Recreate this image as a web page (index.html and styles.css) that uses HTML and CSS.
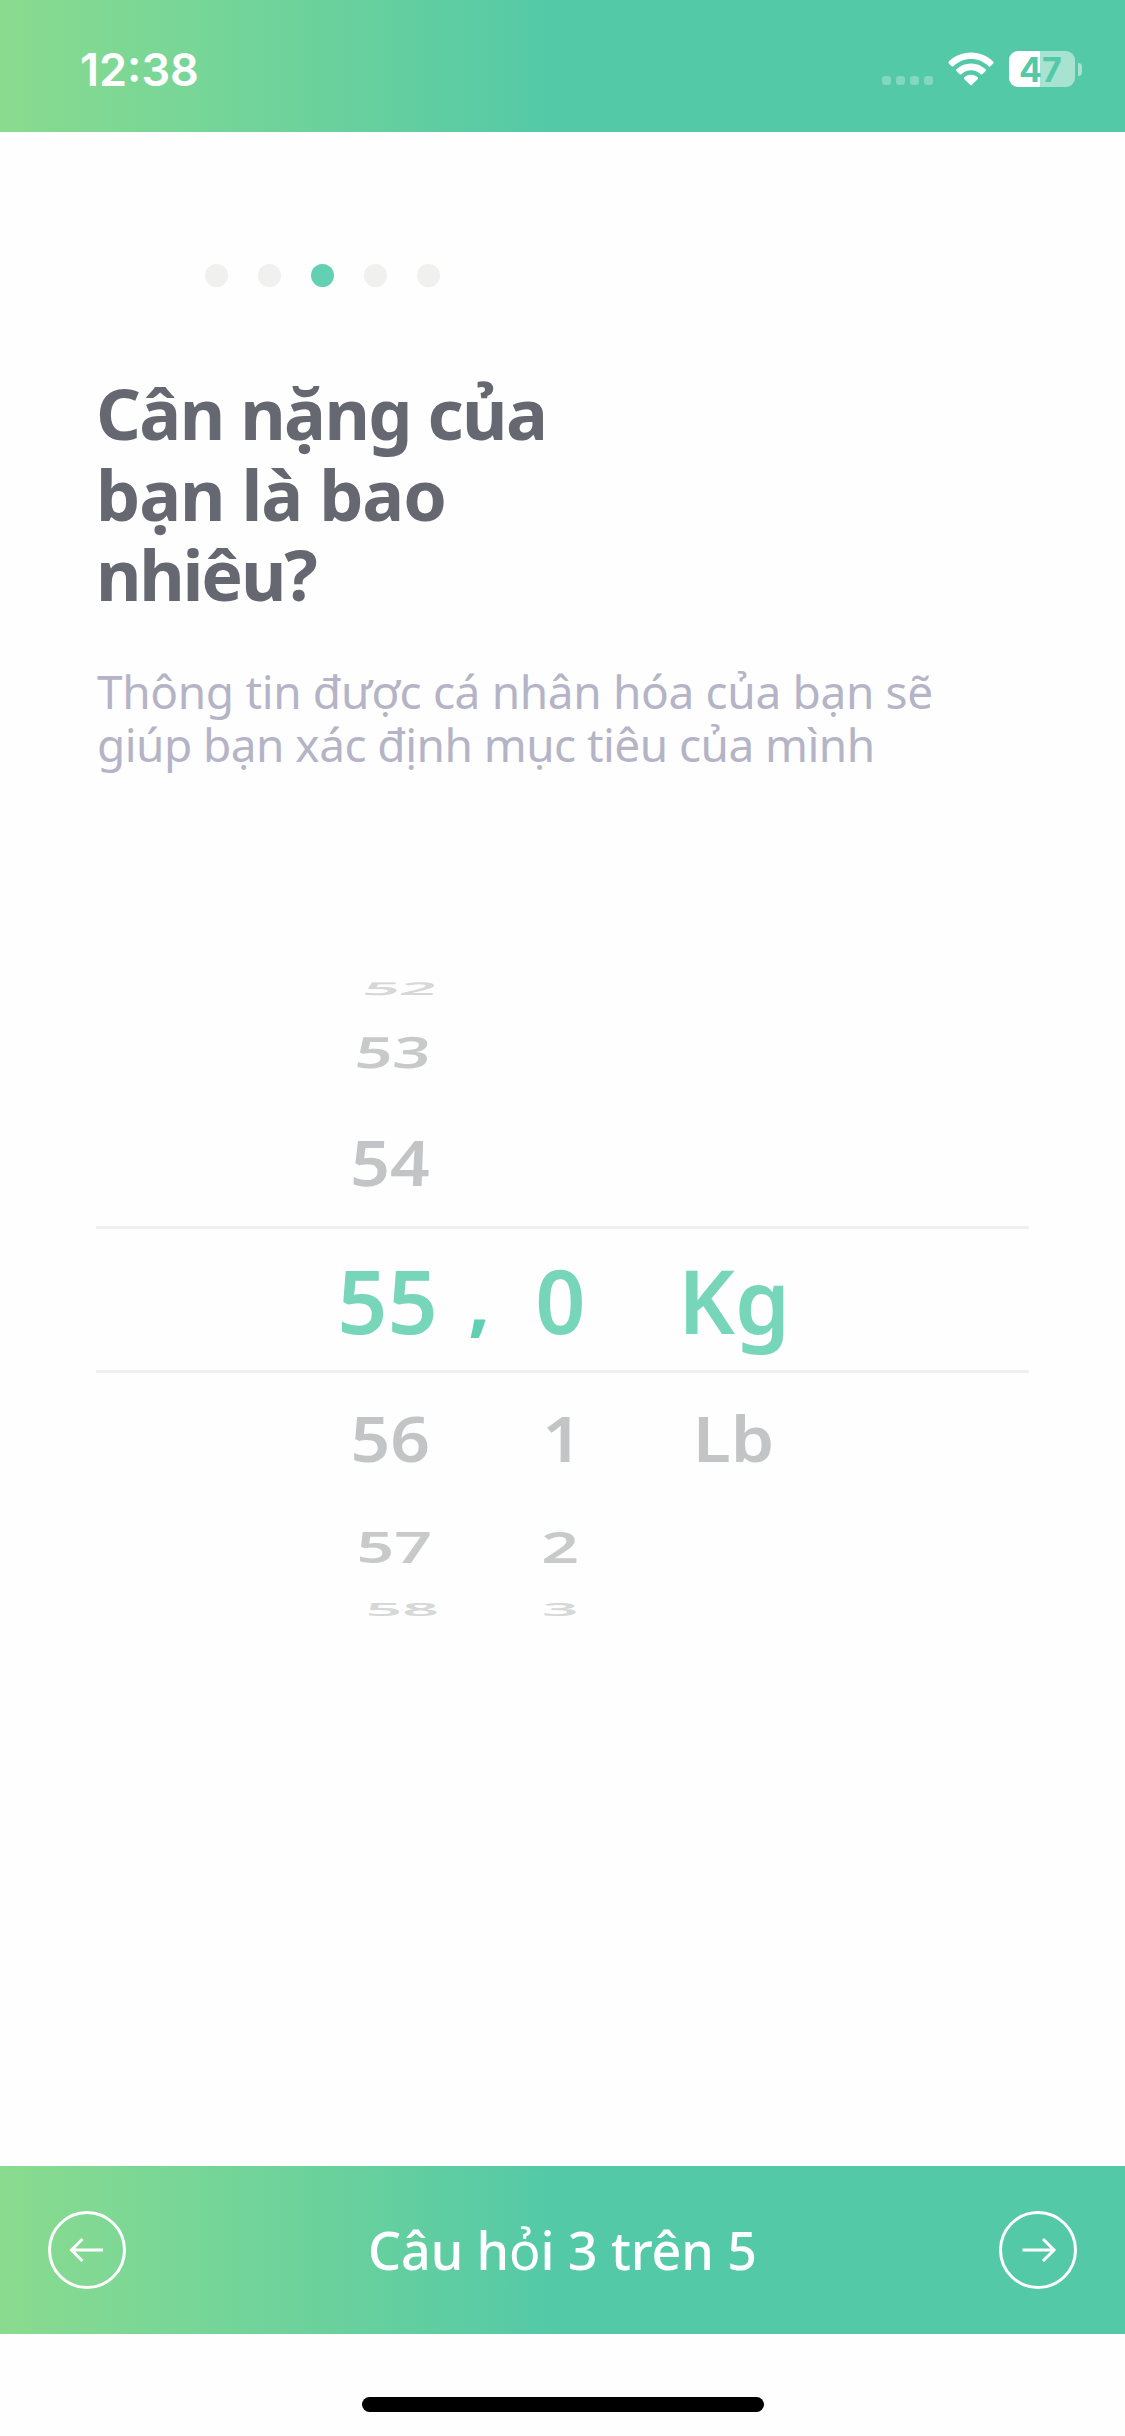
FILE: index.html
```
<!DOCTYPE html>
<html lang="vi">
<head>
<meta charset="utf-8">
<title>Cân nặng</title>
<link rel="stylesheet" href="styles.css">
</head>
<body>
<header class="status">
  <time class="clock">12:38</time>
  <div class="indicators">
    <div class="signal"><i></i><i></i><i></i><i></i></div>
    <svg class="wifi" width="46" height="34" viewBox="0 0 46 34" fill="#fff">
      <path d="M23 .5C32 .5 39.500 4 45.200 9.600Q46 10.500 45.200 11.400L42.300 14.300Q41.500 15 40.600 14.200C35.600 9.600 29.700 7 23 7S10.400 9.600 5.400 14.200Q4.500 15 3.700 14.300L.8 11.400Q0 10.500 .8 9.600C6.500 4 14 .5 23 .5Z"/>
      <path d="M23 11.500C28.900 11.500 33.800 13.800 37.600 17.300Q38.400 18.200 37.600 19L34.300 22.200Q33.500 23 32.600 22.200C29.800 19.700 26.700 18.200 23 18.200S16.200 19.700 13.400 22.200Q12.500 23 11.700 22.200L8.400 19Q7.600 18.200 8.400 17.300C12.200 13.800 17.100 11.500 23 11.500Z"/>
      <path d="M23 22.800C25.700 22.800 28 23.700 29.800 25.200Q30.600 26 29.800 26.900L24 32.700Q23 33.700 22 32.700L16.200 26.900Q15.400 26 16.200 25.200C18 23.700 20.300 22.800 23 22.800Z"/>
    </svg>
    <div class="battery"><span class="level">47</span><span class="cap"></span></div>
  </div>
</header>

<main class="content">
  <div class="steps"><i></i><i></i><i class="on"></i><i></i><i></i></div>
  <h1 class="title"><span class="t1">Cân nặng của</span><span class="t2">bạn là bao</span><span class="t3">nhiêu?</span></h1>
  <p class="hint"><span class="h1">Thông tin được cá nhân hóa của bạn sẽ</span><span class="h2">giúp bạn xác định mục tiêu của mình</span></p>

  <div class="picker">
    <div class="row up3"><span>52</span></div>
    <div class="row up2"><span>53</span></div>
    <div class="row up1"><span>54</span></div>
    <div class="row selected"><span>55</span><b>,</b><span class="dec">0</span><span class="unit">Kg</span></div>
    <div class="row down1"><span>56</span><b></b><span class="dec one">1</span><span class="unit">Lb</span></div>
    <div class="row down2"><span>57</span><b></b><span class="dec">2</span></div>
    <div class="row down3"><span>58</span><b></b><span class="dec">3</span></div>
  </div>
</main>

<nav class="pager">
  <button class="arrow" aria-label="Trước">
    <svg width="78" height="78" viewBox="0 0 78 78" fill="none" stroke="#fff" stroke-width="3"><circle cx="39" cy="39" r="37.500"/><path d="M55 39H23M34.500 28L23.500 39L34.500 50"/></svg>
  </button>
  <span class="progress">Câu h<span class="thin">ỏ</span>i 3 trên 5</span>
  <button class="arrow" aria-label="Sau">
    <svg width="78" height="78" viewBox="0 0 78 78" fill="none" stroke="#fff" stroke-width="3"><circle cx="39" cy="39" r="37.500"/><path d="M23.500 39H55M44 28L55 39L44 50"/></svg>
  </button>
</nav>
<footer class="home"><div class="bar"></div></footer>
</body>
</html>
```
FILE: styles.css
```
* { box-sizing: border-box; }

body {
  margin: 0;
  width: 1125px;
  height: 2436px;
  display: flex;
  flex-direction: column;
  overflow: hidden;
  background: #fefefe;
  font-family: "Noto Sans", "Open Sans", sans-serif;
}

/* Status bar */
.status, .pager {
  background: linear-gradient(90deg, #8adb8e 0, #78d697 180px, #6dd29b 300px, #53c9a8 562px, #54c9a7 100%);
}
.status {
  height: 132px;
  flex: none;
  display: flex;
  justify-content: space-between;
  align-items: center;
  padding: 6px 43px 0 80px;
}
.clock {
  font: 560 45px/1 Inter, sans-serif;
  color: #fff;
}
.indicators { display: flex; align-items: center; }
.signal { display: flex; gap: 5px; margin: 23px 15px 0 0; }
.signal i {
  width: 9px;
  height: 9px;
  border-radius: 3px;
  background: rgba(255, 255, 255, .28);
}
.wifi { margin-right: 15px; }
.battery { display: flex; align-items: center; gap: 3px; }
.level {
  width: 66px;
  height: 36px;
  border-radius: 9px;
  background: linear-gradient(90deg, #fff 31px, #a8e3d1 31px);
  color: #54c9a7;
  font: 650 34px/37px Inter, sans-serif;
  text-align: center;
  padding-right: 3px;
}
.cap {
  width: 4px;
  height: 13px;
  border-radius: 0 4px 4px 0;
  background: #a8e3d1;
}

/* Question */
.content { flex: 1; padding: 132px 96px 0; }
.steps { display: flex; gap: 30px; padding-left: 109px; }
.steps i {
  width: 23px;
  height: 23px;
  border-radius: 50%;
  background: #f0f0ef;
}
.steps .on { background: #64d0b3; }
.title {
  margin: 86px 0 0;
  font-size: 70px;
  line-height: 80.500px;
  font-weight: 700;
  color: #656870;
}
.title span, .hint span { display: block; white-space: nowrap; }
.t1 { letter-spacing: -1.600px; }
.t2 { letter-spacing: -1.100px; }
.t3 { letter-spacing: -2.200px; }
.hint {
  margin: 50px 0 0 1px;
  font-size: 46px;
  line-height: 53px;
  color: #b4b4c6;
}
.h1 { letter-spacing: -.35px; }
.h2 { letter-spacing: -.55px; }

/* Weight wheel: rows flatten the further they are from the centre */
.picker { margin-top: 198px; }
.row {
  display: grid;
  grid-template: 100% / 100px 78px 85px 264px;
  align-items: center;
  justify-items: center;
  padding-left: 244px;
  font-size: 88px;
  line-height: 88px;
  font-weight: 600;
  color: #c3c4c5;
}
.row span { transform: translate(var(--x, 0), var(--y, 0)) skewX(var(--lean, 0)) scale(var(--sx, 1), var(--sy, 1)); }
.row .dec { --x: 0px; }
.row .unit { --x: -1px; }
.row .one { --x: 2px; }
.up3, .down3 { --sx: .73; --sy: .2; color: #d6d7d7; }
.up2, .down2 { --sx: .75; --sy: .49; color: #c8c9c9; }
.up1, .down1 { --sx: .79; --sy: .715; }
.up3 { height: 38px; --x: 10px; --lean: -19deg; }
.up2 { height: 89px; --x: 3px; --lean: -6deg; }
.up1 { height: 130px; --lean: -2deg; --y: 1px; }
.selected {
  height: 147px;
  border: solid #efefef;
  border-width: 3px 0;
  color: #77d5b9;
  font-weight: 560;
  --x: -2.500px;
  --y: 1px;
}
.selected b { font-weight: 700; font-size: 76px; color: #60d0b3; }
.down1 { height: 127px; --y: 2px; }
.down2 { height: 92px; --x: 4px; }
.down3 { height: 34px; --x: 12px; }

/* Bottom navigation */
.pager {
  height: 168px;
  flex: none;
  display: flex;
  align-items: center;
  justify-content: space-between;
  padding: 0 48px;
}
.arrow { padding: 0; border: 0; background: none; height: 78px; }
.arrow svg { display: block; }
.progress {
  font-size: 52px;
  font-weight: 500;
  letter-spacing: -.1px;
  line-height: 1;
  color: #fff;
}
.thin { font-weight: 400; }
.home { height: 102px; flex: none; padding-top: 63px; }
.bar {
  width: 402px;
  height: 15px;
  margin: 0 auto;
  border-radius: 8px;
  background: #000;
}
```
